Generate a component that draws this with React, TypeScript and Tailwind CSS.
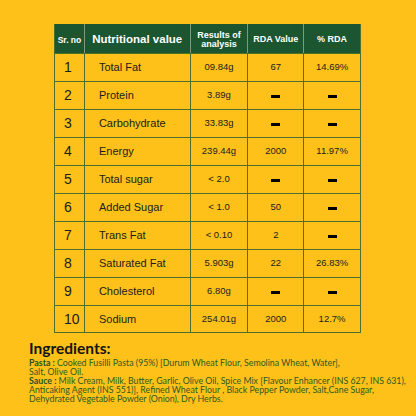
const rows = [
  { n: "1", name: "Total Fat", result: "09.84g", rda: "67", pct: "14.69%" },
  { n: "2", name: "Protein", result: "3.89g", rda: null, pct: null },
  { n: "3", name: "Carbohydrate", result: "33.83g", rda: null, pct: null },
  { n: "4", name: "Energy", result: "239.44g", rda: "2000", pct: "11.97%" },
  { n: "5", name: "Total sugar", result: "< 2.0", rda: null, pct: null },
  { n: "6", name: "Added Sugar", result: "< 1.0", rda: "50", pct: null },
  { n: "7", name: "Trans Fat", result: "< 0.10", rda: "2", pct: null },
  { n: "8", name: "Saturated Fat", result: "5.903g", rda: "22", pct: "26.83%" },
  { n: "9", name: "Cholesterol", result: "6.80g", rda: null, pct: null },
  { n: "10", name: "Sodium", result: "254.01g", rda: "2000", pct: "12.7%" },
];

function Dash() {
  return <div className="w-[9px] h-[3px] bg-black mt-[2px]" />;
}

function Value({ v }: { v: string | null }) {
  return v ? <span>{v}</span> : <Dash />;
}

export default function App() {
  return (
    <div
      className="w-[416px] h-[416px] bg-[#fdc11a] overflow-hidden"
      style={{ fontFamily: '"Liberation Sans", Arial, sans-serif' }}
    >
      <div className="pt-[24px] pl-[54px]">
        <div className="w-[307px] border-l border-[#4d6e2c] text-[#1c1c1c]">
          <div className="flex h-[29px] bg-[#1b5631] text-white font-bold">
            <div className="w-[30px] flex items-center justify-center pt-[3px] text-[8.5px] border-r border-[#7c9a7e]">
              Sr. no
            </div>
            <div className="w-[106px] flex items-center justify-center pt-[3px] text-[11.5px] border-r border-[#7c9a7e]">
              Nutritional value
            </div>
            <div className="w-[58px] flex items-center justify-center pt-[3px] text-[9px] leading-[9px] text-center border-r border-[#7c9a7e]">
              Results of<br />analysis
            </div>
            <div className="w-[56px] flex items-center justify-center pt-[3px] text-[9px] border-r border-[#7c9a7e]">
              RDA Value
            </div>
            <div className="w-[57px] flex items-center justify-center pt-[3px] text-[9px] border-r border-[#4d6e2c]">
              % RDA
            </div>
          </div>
          {rows.map((r) => (
            <div key={r.n} className="flex h-[28px] border-t border-[#4d6e2c] last:border-b">
              <div className="w-[30px] flex items-center pl-[9px] text-[14px] border-r border-[#4d6e2c]">
                {r.n}
              </div>
              <div className="w-[106px] flex items-center pl-[14px] text-[11px] border-r border-[#4d6e2c]">
                {r.name}
              </div>
              <div className="w-[58px] flex items-center justify-center text-[9.5px] border-r border-[#4d6e2c]">
                {r.result}
              </div>
              <div className="w-[56px] flex items-center justify-center text-[9.5px] border-r border-[#4d6e2c]">
                <Value v={r.rda} />
              </div>
              <div className="w-[57px] flex items-center justify-center text-[9.5px] border-r border-[#4d6e2c]">
                <Value v={r.pct} />
              </div>
            </div>
          ))}
        </div>
      </div>
      <div className="pl-[29px] mt-[8px]" style={{ fontFamily: 'Lato, "Open Sans", sans-serif' }}>
        <div className="text-[15.5px] font-bold leading-none text-[#141414]">Ingredients:</div>
        <div className="mt-[1px] text-[8.8px] leading-[9px] text-[#2b5a1f] whitespace-nowrap">
          <span className="font-bold text-[#1e5128]">Pasta : </span>
          Cooked Fusilli Pasta (95%) [Durum Wheat Flour, Semolina Wheat, Water],
          <br />
          Salt, Olive Oil.
          <br />
          <span className="font-bold text-[#1e5128]">Sauce : </span>
          {" "}Milk Cream, Milk, Butter, Garlic, Olive Oil, Spice Mix [Flavour Enhancer (INS 627, INS 631),
          <br />
          Anticaking Agent (INS 551)], Refined Wheat Flour , Black Pepper Powder, Salt,Cane Sugar,
          <br />
          Dehydrated Vegetable Powder (Onion), Dry Herbs.
        </div>
      </div>
    </div>
  );
}
